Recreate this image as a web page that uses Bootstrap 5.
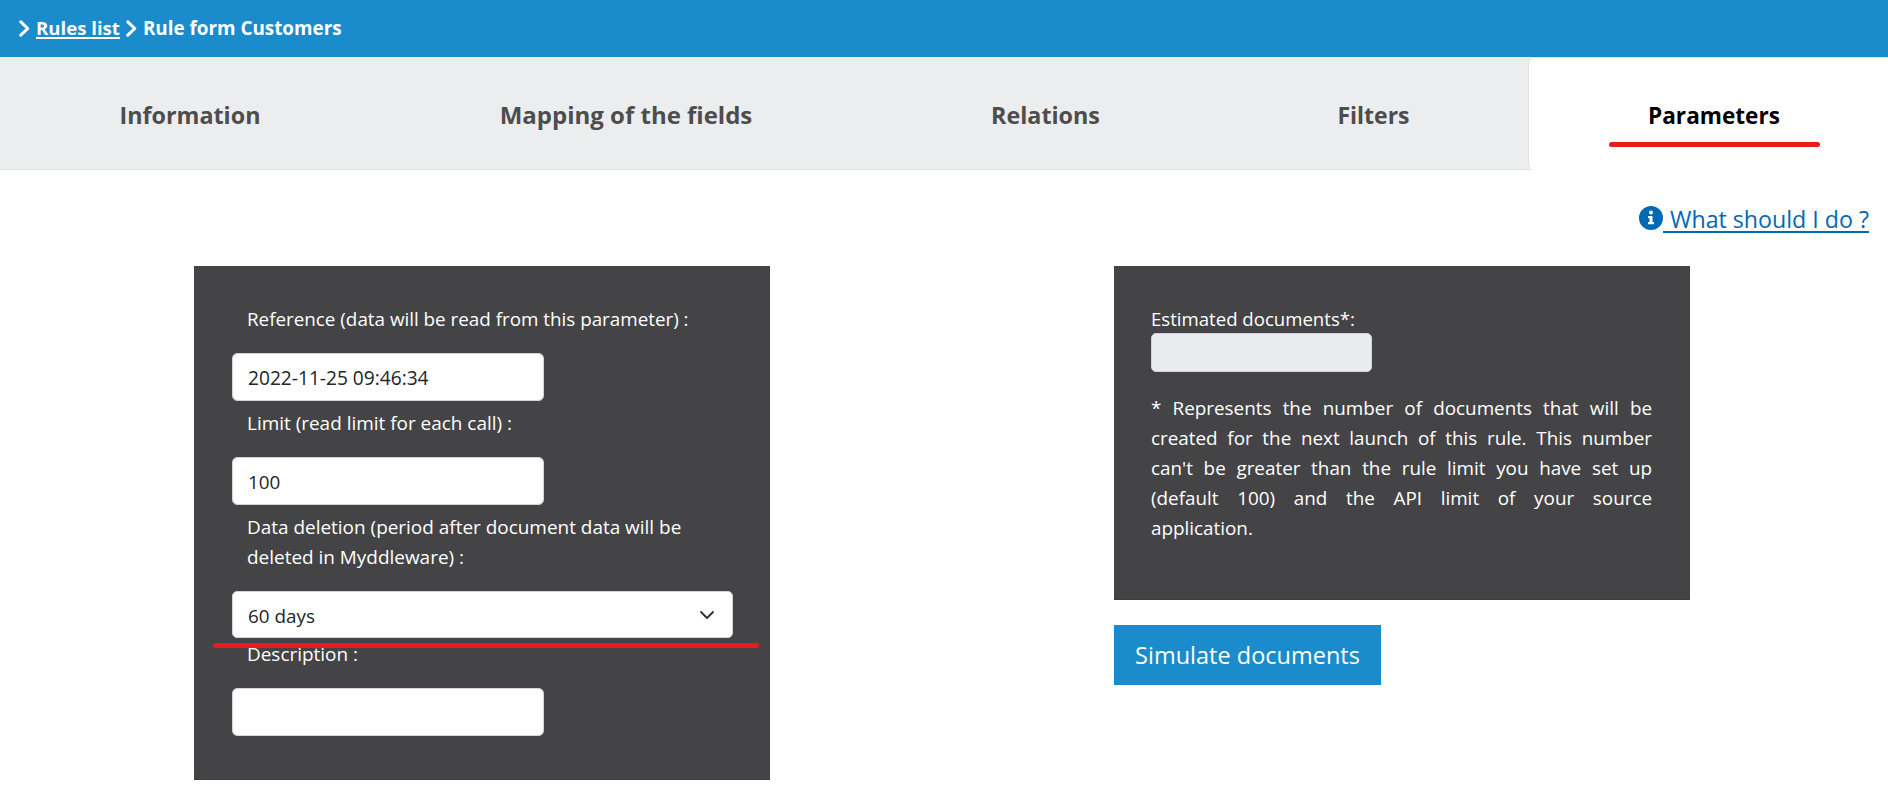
<!DOCTYPE html>
<html lang="en">
<head>
<meta charset="utf-8">
<meta name="viewport" content="width=device-width, initial-scale=1">
<title>Rule form Customers</title>
<link href="https://cdn.jsdelivr.net/npm/bootstrap@5.3.0/dist/css/bootstrap.min.css" rel="stylesheet">
<style>
body{font-family:"Open Sans",sans-serif;font-size:18.85px;line-height:30px;color:#212529;overflow:hidden}
.crumbs{height:57px;background:#1a8bcb;padding:0 19px 2px;font-weight:700;font-size:18.85px}
.crumbs svg{display:block;width:11px;height:17px;margin-top:1px}
.crumbs a{margin:0 6px 0 6px;font-size:18.6px;text-decoration-thickness:2px;text-underline-offset:2px}
.crumbs .here{margin-left:6px}
.rule-tabs{height:113px;background:#ebedef;border-bottom:1px solid #dee2e6;font-weight:700;font-size:23.3px}
.rule-tabs .nav-link{height:113px;padding:2px 0 0;line-height:36px;color:#4d4d4d;border-radius:6px;display:flex;align-items:center;justify-content:center}
.rule-tabs .nav-link.active{color:#000;border-right:0;border-radius:6px 0 0 6px;border-color:#dee2e6 #fff #fff #dee2e6;position:relative;padding:4px 0 0 11px}
.t1{flex:0 0 380px}.t2{flex:0 0 492px}.t3{flex:0 0 347px}.t4{flex:0 0 309px}.t5{flex:1 1 0}
.t2 .nav-link{font-size:24px}.t4 .nav-link{font-size:23px}.t5 .nav-link{font-size:22.6px}
.mark-line{position:absolute;background:#e81c1c;border-radius:3px;height:5px}
.t5 .mark-line{left:80px;top:84px;width:211px}
.help-row{height:96px;padding:32px 19px 0 0;font-size:23.2px}
.help-row a{color:#0069b4;line-height:36px;text-decoration:none}
.help-row .txt{border-bottom:2px solid #0069b4;line-height:28px;padding-left:7px;margin-top:3px;height:28px}
.help-row svg{width:24px;height:24px;margin-top:1px}
.panels{padding-left:194px;gap:344px}
.panel-col{width:576px}
.dark-panel{background:#444446;color:#fff;padding:31px 37px 0 38px;border-bottom:1px solid #3b3b3d}
.dark-panel.form{height:514px;position:relative}
.dark-panel.est{height:334px;padding:38px 38px 0 37px}
.lbl{display:block;padding:7px 14px 19px 15px;font-size:18.95px}
.lbl.first{font-size:18.82px}
.lbl.tight{padding-top:1px;padding-bottom:19px}
.dark-panel .form-control,.dark-panel .form-select{font-size:18.85px;border-color:#ced4da;border-radius:5px;color:#212529;line-height:30px;padding:9px 15px 7px}
.dark-panel .form-control{width:312px;height:48px}
.dark-panel .form-select{width:501px;height:47px;padding-top:9px;padding-bottom:6px;background-position:right 17px center;background-size:16px 16px}
.dark-panel .date{font-size:19.15px}
.dark-panel .form-control.count{width:221px;height:39px;background:#e9ecef;margin-top:-1px}
.est label{font-size:18.6px}
.form .mark-line{left:19px;top:377px;width:546px}
.note{text-align:justify;margin-top:21px;word-spacing:1px}
.btn-sim{background:#1a8bcb;color:#fff;border:0;border-radius:0;width:267px;height:60px;margin-top:25px;font-size:23.5px;padding:2px 0 0}
.btn-sim:hover{background:#1679b1;color:#fff}
</style>
</head>
<body>
<nav class="crumbs d-flex align-items-center text-white" aria-label="breadcrumb">
  <svg viewBox="0 0 11 17" fill="none" stroke="#fff" stroke-width="3" stroke-linecap="round" stroke-linejoin="round"><path d="M1.8 1.8 8.8 8.5 1.8 15.2"/></svg>
  <a href="#" class="text-white">Rules list</a>
  <svg viewBox="0 0 11 17" fill="none" stroke="#fff" stroke-width="3" stroke-linecap="round" stroke-linejoin="round"><path d="M1.8 1.8 8.8 8.5 1.8 15.2"/></svg>
  <span class="here">Rule form Customers</span>
</nav>
<ul class="nav nav-tabs rule-tabs flex-nowrap">
  <li class="nav-item t1"><a class="nav-link" href="#">Information</a></li>
  <li class="nav-item t2"><a class="nav-link" href="#">Mapping of the fields</a></li>
  <li class="nav-item t3"><a class="nav-link" href="#">Relations</a></li>
  <li class="nav-item t4"><a class="nav-link" href="#">Filters</a></li>
  <li class="nav-item t5"><a class="nav-link active" href="#">Parameters<span class="mark-line"></span></a></li>
</ul>
<div class="help-row d-flex justify-content-end">
  <a href="#" class="d-flex align-items-center align-self-start">
    <svg viewBox="0 0 24 24"><circle cx="12" cy="12" r="12" fill="#0069b4"/><circle cx="12" cy="6.6" r="2" fill="#fff"/><path d="M9 10h4.5v6H15v2.3H9V16h1.5v-3.700H9z" fill="#fff"/></svg>
    <span class="txt">What should I do ?</span>
  </a>
</div>
<main class="panels d-flex align-items-start">
  <form class="panel-col dark-panel form">
    <label class="lbl first" for="ref">Reference (data will be read from this parameter) :</label>
    <input id="ref" class="form-control date" type="text" value="2022-11-25 09:46:34">
    <label class="lbl" for="limit">Limit (read limit for each call) :</label>
    <input id="limit" class="form-control" type="text" value="100">
    <label class="lbl" for="del">Data deletion (period after document data will be deleted in Myddleware) :</label>
    <select id="del" class="form-select"><option>60 days</option></select>
    <label class="lbl tight" for="desc">Description :</label>
    <input id="desc" class="form-control" type="text">
    <span class="mark-line"></span>
  </form>
  <section class="panel-col">
    <div class="dark-panel est">
      <label class="d-block" for="count">Estimated documents*:</label>
      <input id="count" class="form-control count" type="text" disabled>
      <p class="note mb-0">* Represents the number of documents that will be created for the next launch of this rule. This number can't be greater than the rule limit you have set up (default 100) and the API limit of your source application.</p>
    </div>
    <button type="button" class="btn btn-sim">Simulate documents</button>
  </section>
</main>
<script src="https://cdn.jsdelivr.net/npm/bootstrap@5.3.0/dist/js/bootstrap.bundle.min.js"></script>
</body>
</html>
